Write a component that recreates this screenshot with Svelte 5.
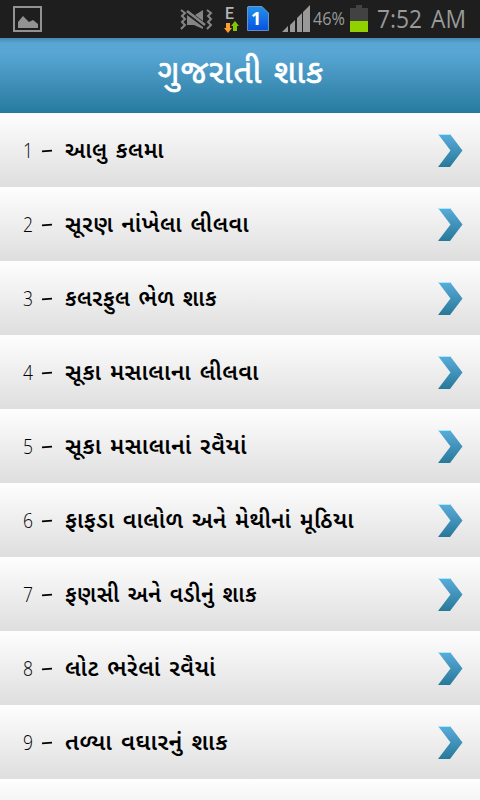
<script lang="ts">
  const recipes: { name: string; width: number }[] = [
    { name: 'આલુ કલમા', width: 99 },
    { name: 'સૂરણ નાંખેલા લીલવા', width: 184 },
    { name: 'કલરફુલ ભેળ શાક', width: 152 },
    { name: 'સૂકા મસાલાના લીલવા', width: 194 },
    { name: 'સૂકા મસાલાનાં રવૈયાં', width: 182 },
    { name: 'ફાફડા વાલોળ અને મેથીનાં મૂઠિયા', width: 289 },
    { name: 'ફણસી અને વડીનું શાક', width: 192 },
    { name: 'લોટ ભરેલાં રવૈયાં', width: 151 },
    { name: 'તળ્યા વઘારનું શાક', width: 163 },
  ]
</script>

<div class="screen">
  <div class="status">
    <svg class="gallery" width="29" height="26" viewBox="0 0 29 26">
      <rect x="1" y="1" width="27" height="24" fill="none" stroke="#929292" stroke-width="2" />
      <path d="M5 22V16L10 10L16 16L20 14L25 18V22Z" fill="#929292" />
    </svg>
    <svg class="vibrate" width="33" height="22" viewBox="0 0 33 22">
      <g fill="none" stroke="#858585" stroke-width="2">
        <path d="M1 1L5 4L2 7L5 10L2 13L5 16L1 20M27 1L31 4L28 7L31 10L28 13L31 16L27 20" />
        <path d="M7 2L25 16" stroke-width="2.5" />
      </g>
      <path d="M7 6L23 18V20L14 16H7ZM15 6L23 1V12Z" fill="#858585" />
    </svg>
    <svg class="edge" width="15" height="26" viewBox="0 0 15 26">
      <text x="1" y="12" font-size="17" textLength="9" lengthAdjust="spacingAndGlyphs">E</text>
      <path d="M2 16H6V21H8L4 26L0 21H2Z" fill="#ff9d2e" />
      <path d="M9 24H13V19H15L11 14L7 19H9Z" fill="#80c700" />
    </svg>
    <svg class="sim" width="22" height="25" viewBox="0 0 22 25">
      <defs>
        <linearGradient id="sim" x2="0" y2="1">
          <stop stop-color="#2492ea" />
          <stop offset="1" stop-color="#0752df" />
        </linearGradient>
      </defs>
      <path d="M1 .5H15L21.5 7V24.5H.5V1Z" fill="url(#sim)" stroke="#82b6e6" stroke-width=".7" />
      <text x="4" y="19" font-size="18">1</text>
    </svg>
    <svg class="signal" width="28" height="27" viewBox="0 0 28 27">
      <path d="M0 27L6 21V27ZM8 27V20L13 15V27ZM15 27V13L20 8V27ZM21 27V7L28 0V27Z" fill="#999" />
    </svg>
    <svg class="percent" width="34" height="26" viewBox="0 0 34 26">
      <text x="0" y="18" textLength="32" lengthAdjust="spacingAndGlyphs">46%</text>
    </svg>
    <svg class="battery" width="18" height="27" viewBox="0 0 18 27">
      <path d="M0 3H6V0H12V3H18V27H0Z" fill="#424242" />
      <path d="M0 16H18V27H0Z" fill="#92d100" />
    </svg>
    <svg class="clock" width="92" height="34" viewBox="0 0 92 34">
      <text x="0" y="24" textLength="45" lengthAdjust="spacingAndGlyphs">7:52</text>
      <text x="54" y="24" textLength="35" lengthAdjust="spacingAndGlyphs">AM</text>
    </svg>
  </div>

  <header>
    <svg width="168" height="60" viewBox="0 0 168 60">
      <text x="2" y="37" textLength="166" lengthAdjust="spacingAndGlyphs">ગુજરાતી શાક</text>
    </svg>
  </header>

  <ul>
    {#each recipes as recipe, i}
      <li>
        <svg class="number" width="41" height="50" viewBox="0 0 41 50">
          <text x="-1" y="33" textLength="10" lengthAdjust="spacingAndGlyphs">{i + 1}</text>
          <path d="M18 26.4L28 25.6" stroke="#000" stroke-width="1.8" />
        </svg>
        <svg class="name" width="340" height="50" viewBox="0 0 340 50">
          <text x="0" y="33" textLength={recipe.width} lengthAdjust="spacingAndGlyphs">{recipe.name}</text>
        </svg>
        <svg class="arrow" width="25" height="33" viewBox="0 0 25 33">
          <defs>
            <linearGradient id="arrow{i}" x2="0" y2="1">
              <stop stop-color="#5aaddb" />
              <stop offset="1" stop-color="#287899" />
            </linearGradient>
          </defs>
          <path d="M0 0H12L24.5 16.5L12 33H0L12.5 16.5Z" fill="url(#arrow{i})" />
          <path d="M0 .5H12" stroke="#9eeeff" />
        </svg>
      </li>
    {/each}
    <li></li>
  </ul>
</div>

<style>
  .screen {
    display: flex;
    flex-direction: column;
    width: 480px;
    height: 800px;
    overflow: hidden;
    font-family: 'Noto Sans Gujarati', 'Noto Sans', sans-serif;
  }

  svg {
    display: block;
    flex-shrink: 0;
    overflow: visible;
  }

  .status {
    display: flex;
    align-items: flex-start;
    height: 38px;
    flex-shrink: 0;
    background: #1e1e1e;
  }

  .gallery {
    margin: 6px 0 0 13px;
  }

  .vibrate {
    margin: 9px 0 0 138px;
  }

  .edge {
    margin: 7px 0 0 11px;
    fill: #b5b5b5;
    font-family: Roboto, sans-serif;
    font-weight: 500;
  }

  .sim {
    margin: 6px 0 0 8px;
  }

  .sim text {
    fill: #fff;
    font-family: 'Noto Sans', sans-serif;
    font-weight: bold;
  }

  .signal {
    margin: 5px 0 0 13px;
  }

  .percent {
    margin: 7px 0 0 3px;
    font-size: 18px;
    fill: #999;
  }

  .battery {
    margin: 5px 0 0 3px;
  }

  .clock {
    margin: 4px 0 0 9px;
    font-size: 26px;
    fill: #999;
  }

  .percent,
  .clock {
    font-family: 'Open Sans', sans-serif;
    font-weight: 400;
  }

  header {
    display: flex;
    justify-content: center;
    height: 75px;
    flex-shrink: 0;
    padding-top: 8px;
    box-sizing: border-box;
    background: linear-gradient(#4789b1, #59a6d4 7%, #59a6d4 20%, #267a9f);
  }

  header text {
    font-size: 33px;
    letter-spacing: 1px;
    word-spacing: 2px;
    fill: #fff;
    stroke: #fff;
    stroke-width: 0.7px;
  }

  ul {
    margin: 0;
    padding: 0;
    list-style: none;
  }

  li {
    display: flex;
    align-items: center;
    height: 74px;
    padding: 0 17px 0 24px;
    box-sizing: border-box;
    background: linear-gradient(#fefefe, #dedede);
  }

  .number {
    font-family: 'Open Sans', sans-serif;
    font-size: 20px;
    font-weight: 300;
  }

  .name {
    font-size: 23px;
    font-weight: 600;
    letter-spacing: 0.5px;
    word-spacing: 2px;
  }

  .arrow {
    margin: 1px 0 0 auto;
  }
</style>
